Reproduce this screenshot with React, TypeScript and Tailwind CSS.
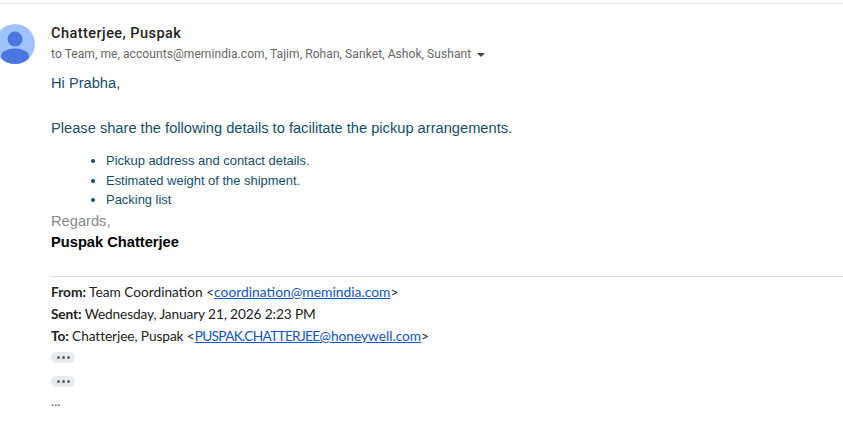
export default function App() {
  return (
    <div className="w-[843px] h-[429px] overflow-hidden bg-white font-['Roboto',sans-serif]">
      <div className="h-[3px]" />
      <div className="h-px bg-[#e8e8e8]" />
      <div className="flex pt-5">
        <div className="w-[51px] shrink-0 overflow-hidden">
          <svg width="40" height="40" viewBox="0 0 40 40" className="-ml-[5px]">
            <defs>
              <clipPath id="c"><circle cx="20" cy="20" r="20" /></clipPath>
            </defs>
            <circle cx="20" cy="20" r="20" fill="#a0c3ff" />
            <g clipPath="url(#c)">
              <circle cx="20" cy="15" r="7.5" fill="#4976e0" />
              <ellipse cx="20" cy="32.5" rx="14" ry="8" fill="#4976e0" />
            </g>
          </svg>
        </div>
        <div className="flex-1">
          <div className="text-[14.5px] leading-5 font-medium text-[#1f1f1f] tracking-[0.45px]">Chatterjee, Puspak</div>
          <div className="flex items-center text-[12px] leading-4 mt-[2px] text-[#666666] tracking-[0.08px]">
            <span>to Team, me, accounts@memindia.com, Tajim, Rohan, Sanket, Ashok, Sushant</span>
            <span className="ml-[6px] mt-[1px] w-0 h-0 border-x-[4px] border-x-transparent border-t-[4px] border-t-[#444746]" />
          </div>
          <div className="font-['Liberation_Sans',sans-serif] text-[#134f6c] text-[14.67px] leading-[17px] mt-[13px]">
            <p>Hi Prabha,</p>
            <p className="mt-[17px] pt-[11px]">Please share the following details to facilitate the pickup arrangements.</p>
            <ul className="list-disc pl-[55px] mt-[14px] text-[12.95px] leading-[19.5px]">
              <li>Pickup address and contact details.</li>
              <li>Estimated weight of the shipment.</li>
              <li>Packing list</li>
            </ul>
            <p className="text-[#888888] mt-[3px]">Regards,</p>
            <p className="text-black font-bold mt-[4px]">Puspak Chatterjee</p>
          </div>
          <div className="h-px bg-[#dddddd] mt-[25px]" />
          <div className="font-['Lato',sans-serif] text-[13.7px] leading-[22px] text-[#222222] mt-[4px]">
            <div><b className="font-bold">From:</b> Team Coordination &lt;<a className="text-[#1155cc] underline text-[13.85px]">coordination@memindia.com</a>&gt;</div>
            <div className="tracking-[-0.12px]"><b className="font-bold">Sent:</b> Wednesday, January 21, 2026 2:23 PM</div>
            <div><span className="tracking-[-0.09px]"><b className="font-bold">To:</b> Chatterjee, Puspak &lt;</span><a className="text-[#1155cc] underline"><span className="tracking-[-0.7px]">PUSPAK.CHATTERJEE</span>@honeywell.com</a>&gt;</div>
          </div>
          <Dots className="mt-[5px]" />
          <Dots className="mt-[13px]" />
          <div className="font-['Open_Sans',sans-serif] text-[12px] leading-4 text-[#444444] mt-[7px]">...</div>
        </div>
      </div>
    </div>
  );
}

function Dots({ className }: { className: string }) {
  return (
    <div className={`w-6 h-[11px] rounded-full bg-[#e8eaed] flex items-center justify-center gap-[2px] ${className}`}>
      <span className="w-[3px] h-[3px] rounded-full bg-[#5f6368]" />
      <span className="w-[3px] h-[3px] rounded-full bg-[#5f6368]" />
      <span className="w-[3px] h-[3px] rounded-full bg-[#5f6368]" />
    </div>
  );
}
